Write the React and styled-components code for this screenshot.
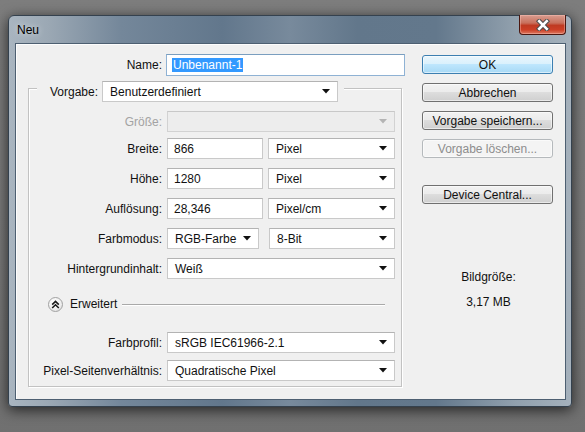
import React from "react";
import styled, { createGlobalStyle } from "styled-components";

const GlobalStyle = createGlobalStyle`
  html, body {
    margin: 0;
    padding: 0;
  }
  body {
    background: #7a7a7a;
    font-family: "Liberation Sans", Arial, sans-serif;
    font-size: 12px;
    color: #111;
  }
`;

const Desktop = styled.div`
  width: 585px;
  height: 432px;
  box-sizing: border-box;
  padding: 15px 0 0 8px;
  background: linear-gradient(#7d7d7d, #787878 60%, #707070);
  overflow: hidden;
`;

const Window = styled.div`
  width: 564px;
  height: 392px;
  box-sizing: border-box;
  display: flex;
  flex-direction: column;
  border: 1px solid #34414e;
  border-radius: 6px 6px 4px 4px;
  background: linear-gradient(
    90deg,
    #a9b5c0 0%,
    #9ba8b4 7%,
    #74879a 20%,
    #62778c 38%,
    #788a9c 50%,
    #62778b 62%,
    #63788c 76%,
    #91a0ad 90%,
    #a5b1bc 100%
  );
  box-shadow: 0 3px 14px rgba(0, 0, 0, 0.7);
`;

const TitleBar = styled.div`
  height: 27px;
  display: flex;
  justify-content: space-between;
  align-items: flex-start;
  padding-left: 8px;
`;

const Title = styled.span`
  align-self: center;
  font-size: 12px;
  color: #000;
  text-shadow: 0 0 6px rgba(255, 255, 255, 0.7);
`;

const CloseButton = styled.div`
  width: 47px;
  height: 20px;
  margin: -1px 5px 0 0;
  box-sizing: border-box;
  display: flex;
  align-items: center;
  justify-content: center;
  border: 1px solid #4a1710;
  border-top: none;
  border-radius: 0 0 4px 4px;
  background: linear-gradient(#d99d90 0%, #c8705c 42%, #bf3a22 55%, #cc3f26 78%, #dc7a62 100%);
  box-shadow: inset 0 0 0 1px rgba(255, 200, 190, 0.4);
`;

const Client = styled.div`
  flex: 1;
  margin: 0 5px 6px 6px;
  display: flex;
  padding: 10px 0 0 12px;
  background: #f0f0f0;
  border: 1px solid #4d5f71;
  box-shadow: inset 1px 1px 0 #fdfdfd;
`;

const LeftColumn = styled.div`
  width: 377px;
  display: flex;
  flex-direction: column;
`;

const RightColumn = styled.div`
  width: 131px;
  margin-left: 17px;
  padding-top: 1px;
  display: flex;
  flex-direction: column;
`;

const NameRow = styled.div`
  display: grid;
  grid-template-columns: 134px 239px;
  column-gap: 4px;
  height: 22px;
`;

const Label = styled.span`
  display: flex;
  align-items: center;
  justify-content: flex-end;
  white-space: nowrap;
  color: ${(p) => (p.$disabled ? "#a3a3a3" : "#111")};
`;

const NameInput = styled.div`
  box-sizing: border-box;
  display: flex;
  align-items: center;
  padding-left: 5px;
  background: #fff;
  border: 1px solid #8fb2d4;
  border-top-color: #7a9ebf;
`;

const Selection = styled.span`
  background: #3399ff;
  color: #fff;
  padding: 0 1px;
  line-height: 14px;
`;

const Group = styled.div`
  margin-top: 12px;
  width: 374px;
  box-sizing: border-box;
  display: flex;
  flex-direction: column;
  padding: 0 6px 5px 0;
  border: 1px solid #c2c2c2;
  box-shadow: inset 1px 1px 0 #fff, 1px 1px 0 #fff;
`;

const Legend = styled.div`
  align-self: flex-start;
  height: 21px;
  margin: -8px 0 0 8px;
  padding: 0 6px 0 13px;
  display: flex;
  align-items: center;
  gap: 4px;
  background: #f0f0f0;
`;

const Row = styled.div`
  display: grid;
  grid-template-columns: 133px 228px;
  column-gap: 5px;
  height: 21px;
  margin-top: ${(p) => p.$gap}px;
`;

const Pair = styled.div`
  display: grid;
  grid-template-columns: ${(p) => p.$cols};
  column-gap: ${(p) => p.$space}px;
  height: 21px;
`;

const Box = styled.div`
  box-sizing: border-box;
  height: 21px;
  display: flex;
  align-items: center;
  justify-content: space-between;
  padding: 0 7px 0 ${(p) => (p.$input ? 6 : 7)}px;
  background: ${(p) => (p.$disabled ? "#ededed" : "#fff")};
  border: 1px solid ${(p) => (p.$disabled ? "#d2d2d2" : "#c9c9c9")};
  border-top-color: ${(p) => (p.$disabled ? "#c8c8c8" : "#b3b3b3")};
  color: #111;
  white-space: nowrap;
`;

const LegendSelect = styled(Box)`
  width: 236px;
`;

const Advanced = styled.div`
  display: flex;
  align-items: center;
  height: 16px;
  margin-top: 17px;
  padding-left: 19px;
`;

const ToggleCircle = styled.div`
  width: 15px;
  height: 15px;
  box-sizing: border-box;
  border-radius: 50%;
  border: 1px solid #a2a2a2;
  background: radial-gradient(circle at 40% 35%, #ffffff 0%, #f2f2f2 50%, #d6d6d6 100%);
  display: flex;
  align-items: center;
  justify-content: center;
`;

const AdvancedText = styled.span`
  margin-left: 7px;
`;

const Rule = styled.div`
  flex: 1;
  height: 1px;
  margin: 0 10px 0 5px;
  background: #a9a9a9;
  box-shadow: 0 1px 0 #fff;
`;

const Button = styled.div`
  box-sizing: border-box;
  height: 19px;
  margin-top: ${(p) => p.$gap}px;
  display: flex;
  align-items: center;
  justify-content: center;
  border-radius: 3px;
  border: 1px solid ${(p) => (p.$default ? "#3c7fb1" : p.$disabled ? "#b5b9bc" : "#707070")};
  color: ${(p) => (p.$disabled ? "#8d8d8d" : "#111")};
  background: ${(p) =>
    p.$default
      ? "linear-gradient(#eaf6fd 0%, #d9f0fc 49%, #bee6fd 50%, #a7d9f5 100%)"
      : p.$disabled
      ? "#f4f4f4"
      : "linear-gradient(#f2f2f2 0%, #ebebeb 49%, #dddddd 50%, #cfcfcf 100%)"};
  box-shadow: inset 0 0 0 1px rgba(255, 255, 255, 0.55);
  white-space: nowrap;
`;

const SizeInfo = styled.div`
  margin-top: ${(p) => p.$gap}px;
  text-align: center;
  line-height: 15px;
  padding-left: 2px;
`;

const Arrow = ({ disabled }) => (
  <svg width="8" height="5" viewBox="0 0 8 5">
    <path d="M0 0 H8 L4 4.5 Z" fill={disabled ? "#b4b4b4" : "#111"} />
  </svg>
);

const Select = ({ value, disabled }) => (
  <Box $disabled={disabled}>
    <span>{value}</span>
    <Arrow disabled={disabled} />
  </Box>
);

const CloseIcon = () => (
  <svg width="14" height="12" viewBox="0 0 14 12">
    <path d="M3.2 2.2 L10.8 9.8 M10.8 2.2 L3.2 9.8" stroke="#4b4b4b" strokeWidth="4.6" strokeLinecap="square" />
    <path d="M3.2 2.2 L10.8 9.8 M10.8 2.2 L3.2 9.8" stroke="#fff" strokeWidth="2.6" strokeLinecap="square" />
  </svg>
);

const ChevronsUp = () => (
  <svg width="9" height="9" viewBox="0 0 9 9">
    <path
      d="M1.2 4.6 L4.5 1.4 L7.8 4.6 M1.2 8 L4.5 4.8 L7.8 8"
      stroke="#1a1a1a"
      strokeWidth="1.6"
      fill="none"
    />
  </svg>
);

export default function App() {
  return (
    <Desktop>
      <GlobalStyle />
      <Window>
        <TitleBar>
          <Title>Neu</Title>
          <CloseButton>
            <CloseIcon />
          </CloseButton>
        </TitleBar>
        <Client>
          <LeftColumn>
            <NameRow>
              <Label>Name:</Label>
              <NameInput>
                <Selection>Unbenannt-1</Selection>
              </NameInput>
            </NameRow>

            <Group>
              <Legend>
                <Label>Vorgabe:</Label>
                <LegendSelect>
                  <span>Benutzerdefiniert</span>
                  <Arrow />
                </LegendSelect>
              </Legend>

              <Row $gap={9}>
                <Label $disabled>Größe:</Label>
                <Select value="" disabled />
              </Row>
              <Row $gap={6}>
                <Label>Breite:</Label>
                <Pair $cols="96px 127px" $space={5}>
                  <Box $input>866</Box>
                  <Select value="Pixel" />
                </Pair>
              </Row>
              <Row $gap={9}>
                <Label>Höhe:</Label>
                <Pair $cols="96px 127px" $space={5}>
                  <Box $input>1280</Box>
                  <Select value="Pixel" />
                </Pair>
              </Row>
              <Row $gap={9}>
                <Label>Auflösung:</Label>
                <Pair $cols="96px 127px" $space={5}>
                  <Box $input>28,346</Box>
                  <Select value="Pixel/cm" />
                </Pair>
              </Row>
              <Row $gap={9}>
                <Label>Farbmodus:</Label>
                <Pair $cols="92px 126px" $space={10}>
                  <Select value="RGB-Farbe" />
                  <Select value="8-Bit" />
                </Pair>
              </Row>
              <Row $gap={9}>
                <Label>Hintergrundinhalt:</Label>
                <Select value="Weiß" />
              </Row>

              <Advanced>
                <ToggleCircle>
                  <ChevronsUp />
                </ToggleCircle>
                <AdvancedText>Erweitert</AdvancedText>
                <Rule />
              </Advanced>

              <Row $gap={20}>
                <Label>Farbprofil:</Label>
                <Select value="sRGB IEC61966-2.1" />
              </Row>
              <Row $gap={7}>
                <Label>Pixel-Seitenverhältnis:</Label>
                <Select value="Quadratische Pixel" />
              </Row>
            </Group>
          </LeftColumn>

          <RightColumn>
            <Button $default $gap={0}>OK</Button>
            <Button $gap={9}>Abbrechen</Button>
            <Button $gap={9}>Vorgabe speichern...</Button>
            <Button $disabled $gap={9}>Vorgabe löschen...</Button>
            <Button $gap={27}>Device Central...</Button>
            <SizeInfo $gap={66}>Bildgröße:</SizeInfo>
            <SizeInfo $gap={10}>3,17 MB</SizeInfo>
          </RightColumn>
        </Client>
      </Window>
    </Desktop>
  );
}
